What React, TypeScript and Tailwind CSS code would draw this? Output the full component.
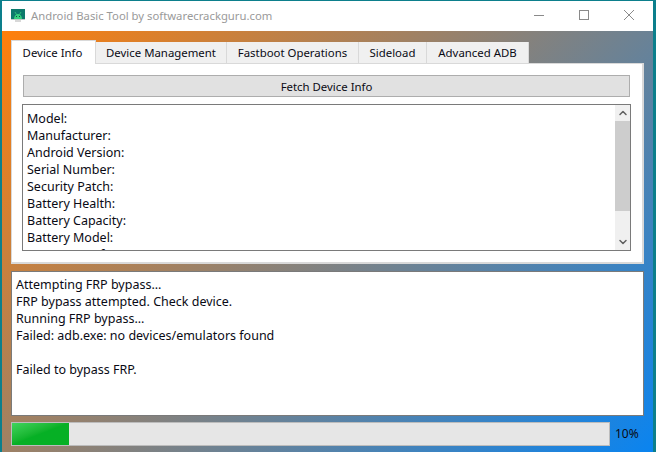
import { ChevronUp, ChevronDown } from 'lucide-react'

const TABS = [
  { label: 'Device Info', width: 'w-[85px]' },
  { label: 'Device Management', width: 'w-[131px]' },
  { label: 'Fastboot Operations', width: 'w-[132px]' },
  { label: 'Sideload', width: 'w-[68px]' },
  { label: 'Advanced ADB', width: 'w-[102px]' },
]

const FIELDS = [
  'Model:',
  'Manufacturer:',
  'Android Version:',
  'Serial Number:',
  'Security Patch:',
  'Battery Health:',
  'Battery Capacity:',
  'Battery Model:',
  'Processor Info:',
]

const LOG = [
  'Attempting FRP bypass...',
  'FRP bypass attempted. Check device.',
  'Running FRP bypass...',
  'Failed: adb.exe: no devices/emulators found',
  '',
  'Failed to bypass FRP.',
]

function AppIcon() {
  return (
    <svg width="14" height="14" viewBox="0 0 14 14" className="shrink-0">
      <rect x="0" y="0" width="14" height="10" fill="#0d7a6c" />
      <rect x="0" y="10" width="14" height="1" fill="#bfc9c6" />
      <rect x="4" y="11" width="6" height="2" fill="#d8d8d8" />
      <path d="M3 10c0-3 1.700-5 4-5s4 2 4 5z" fill="#35d07f" />
      <path d="M4 3l1.500 2.500M10 3l-1.500 2.500" stroke="#35d07f" strokeWidth="0.8" />
      <rect x="5" y="7" width="1" height="1" fill="#0d4a40" />
      <rect x="8" y="7" width="1" height="1" fill="#0d4a40" />
    </svg>
  )
}

export default function App() {
  return (
    <div className="w-[656px] h-[452px] overflow-hidden bg-[#0c7f8c] pl-[2px] pr-[3px] pt-[1px] font-['Noto_Sans',sans-serif] text-[11.4px] text-[#0a0a14]">
      <div className="flex h-[30px] items-center bg-white pl-[9px]">
        <AppIcon />
        <span className="ml-[6px] flex-1 text-[11.3px] text-[#9a9a9a]">Android Basic Tool by softwarecrackguru.com</span>
        <svg width="120" height="30" viewBox="0 0 120 30" fill="none" stroke="#8a8a8a" className="mr-[5px]">
          <path d="M6 14.500h10" />
          <rect x="51.500" y="9.500" width="9" height="9" />
          <path d="M96 9l10 10M106 9l-10 10" />
        </svg>
      </div>

      <div className="h-[421px] bg-linear-135/srgb from-[#ff7f0a] to-[#0a84f0] pl-[9px] pr-[9px] pt-[9px]">
        <div className="flex h-[23px] items-end">
          {TABS.map((tab, i) => (
            <div
              key={tab.label}
              className={
                i === 0
                  ? `${tab.width} z-10 -mb-px flex h-[24px] items-center justify-center border border-b-0 border-[#d9d9d9] bg-white pr-[2px]`
                  : `${tab.width} flex h-[21px] items-center justify-center border-r border-[#d9d9d9] bg-[#f0f0f0] pt-px`
              }
            >
              {tab.label}
            </div>
          ))}
        </div>

        <div className="h-[201px] border-b-2 border-l border-r-2 border-t border-[#d9d9d9] bg-white pl-[10px] pr-[11px] pt-[11px]">
          <div className="mx-px flex h-[22px] items-center justify-center border border-[#adadad] bg-[#e1e1e1] pt-px">Fetch Device Info</div>
          <div className="mt-[7px] flex h-[147px] border border-[#7a7a7a] bg-white">
            <div className="h-full flex-1 overflow-hidden pl-[4px] pt-[5px] text-[12.5px] leading-[17px]">
              {FIELDS.map(f => (
                <div key={f}>{f}</div>
              ))}
            </div>
            <div className="flex w-[15px] flex-col items-center bg-[#f0f0f0]">
              <ChevronUp size={12} strokeWidth={3} className="my-[2px] text-[#606060]" />
              <div className="h-[90px] w-full bg-[#cdcdcd]" />
              <div className="flex-1" />
              <ChevronDown size={12} strokeWidth={3} className="my-[2px] text-[#606060]" />
            </div>
          </div>
        </div>

        <div className="mt-[7px] h-[145px] border border-[#7a7a7a] bg-white pl-[4px] pt-[4px] text-[12.5px] leading-[17px]">
          {LOG.map((line, i) => (
            <div key={i} className="h-[17px]">{line}</div>
          ))}
        </div>

        <div className="mt-[6px] flex items-center">
          <div className="h-[24px] w-[599px] border border-[#bcbcbc] bg-[#e6e6e6]">
            <div className="h-full w-[57px] bg-gradient-to-br from-[#3fd45c] via-[#06b025] to-[#06b025]" />
          </div>
          <span className="ml-[5px] text-[12px]">10%</span>
        </div>
      </div>
    </div>
  )
}
